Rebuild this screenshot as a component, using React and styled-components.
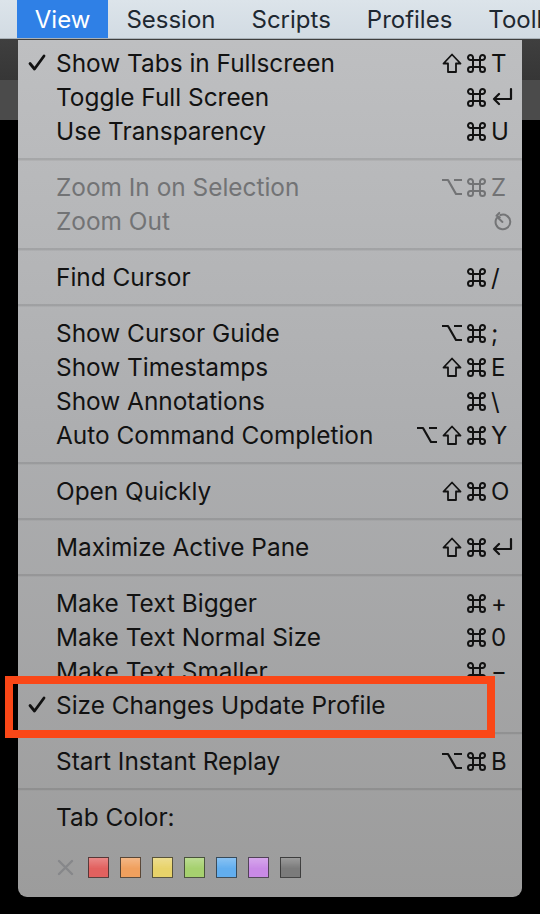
import React from "react";
import { styled, createGlobalStyle } from "styled-components";

const GlobalStyle = createGlobalStyle`
  html, body {
    margin: 0;
    padding: 0;
    background: #000;
  }
  body {
    font-family: Inter, "Liberation Sans", "DejaVu Sans", sans-serif;
  }
`;

const Screen = styled.div`
  position: relative;
  width: 540px;
  height: 914px;
  overflow: hidden;
  background: #000;
`;

const MenuBar = styled.div`
  display: flex;
  align-items: stretch;
  height: 38px;
  background: linear-gradient(#dce4ea, #d2dbe3);
  border-bottom: 1px solid #aab2b9;
`;

const MenuTitle = styled.div`
  display: flex;
  align-items: center;
  padding: 0 18px;
  margin-left: ${(p) => p.$offset || 0}px;
  font-size: 24px;
  color: ${(p) => (p.$active ? "#fff" : "#1e2831")};
  background: ${(p) => (p.$active ? "#2f80e6" : "transparent")};
  white-space: nowrap;
`;

const WindowTitleBand = styled.div`
  height: 41px;
  background: linear-gradient(#3f3f3f, #363636);
`;

const WindowTabBand = styled.div`
  height: 40px;
  background: #4b4b4b;
`;

const Terminal = styled.div`
  height: 794px;
  background: #000;
`;

const Menu = styled.div`
  position: absolute;
  left: 18px;
  top: 40px;
  width: 504px;
  height: 857px;
  box-sizing: border-box;
  padding-top: 6px;
  border-radius: 0 0 9px 9px;
  background: linear-gradient(#bebfc1 0%, #adaeb0 45%, #9c9c9c 100%);
  display: flex;
  flex-direction: column;
`;

const Row = styled.div`
  display: flex;
  align-items: center;
  height: 34px;
  padding: 0 7px 0 10px;
  font-size: 24.4px;
  color: ${(p) => (p.$disabled ? "#727375" : "#121212")};
`;

const Check = styled.div`
  width: 28px;
  height: 34px;
  flex: none;
  display: flex;
  align-items: center;
`;

const Label = styled.div`
  flex: 1;
  white-space: nowrap;
`;

const Mods = styled.div`
  display: flex;
  justify-content: flex-end;
  height: 34px;
`;

const Mod = styled.span`
  width: 25px;
  height: 34px;
  display: flex;
  align-items: center;
  justify-content: center;
`;

const Key = styled.span`
  width: 26px;
  padding-left: 2px;
  box-sizing: border-box;
  display: flex;
  align-items: center;
  font-size: 24px;
`;

const Separator = styled.div`
  height: 22px;
  display: flex;
  align-items: center;
  &::after {
    content: "";
    flex: 1;
    height: 2px;
    background: rgba(0, 0, 0, 0.1);
    border-bottom: 1px solid rgba(255, 255, 255, 0.12);
  }
`;

const SwatchRow = styled.div`
  display: flex;
  align-items: center;
  gap: 11px;
  padding: 23px 0 0 39px;
`;

const NoColor = styled.span`
  width: 17px;
  height: 21px;
  margin-right: 3px;
  display: flex;
  align-items: center;
`;

const Swatch = styled.span`
  width: 21px;
  height: 21px;
  box-sizing: border-box;
  border: 1px solid rgba(40, 40, 40, 0.75);
  background: linear-gradient(
    rgba(255, 255, 255, 0.25),
    rgba(255, 255, 255, 0) 55%
  ),
  ${(p) => p.$color};
`;

const Highlight = styled.div`
  position: absolute;
  left: 5px;
  top: 676px;
  width: 490px;
  height: 62px;
  box-sizing: border-box;
  border: 8px solid #fa4717;
  pointer-events: none;
`;

const stroke = (c) => ({
  stroke: c,
  fill: "none",
  strokeWidth: 2,
  strokeLinecap: "round",
  strokeLinejoin: "round",
});

const CheckIcon = () => (
  <svg width="18" height="18" viewBox="0 0 18 18">
    <path d="M2 9.5 L6.5 15 L16 2" {...stroke("#111")} strokeWidth="2.8" />
  </svg>
);

const CmdIcon = ({ c }) => (
  <svg width="21" height="21" viewBox="0 0 21 21">
    <path
      d="M7 7 H14 V14 H7 Z M7 7 V4.5 A2.5 2.5 0 1 0 4.5 7 H7 M14 7 H16.5 A2.5 2.5 0 1 0 14 4.5 V7 M14 14 V16.5 A2.5 2.5 0 1 0 16.5 14 H14 M7 14 H4.5 A2.5 2.5 0 1 0 7 16.5 V14"
      {...stroke(c)}
      strokeWidth="2"
    />
  </svg>
);

const ShiftIcon = ({ c }) => (
  <svg width="20" height="21" viewBox="0 0 20 21">
    <path d="M10 1.5 L18.5 10.5 H14 V19 H6 V10.5 H1.5 Z" {...stroke(c)} strokeWidth="1.8" />
  </svg>
);

const OptIcon = ({ c }) => (
  <svg width="22" height="20" viewBox="0 0 22 20">
    <path d="M1 3 H7 L15 17 H21 M13 3 H21" {...stroke(c)} strokeWidth="2.2" strokeLinecap="butt" />
  </svg>
);

const ReturnIcon = ({ c }) => (
  <svg width="22" height="20" viewBox="0 0 22 20">
    <path d="M20 2 V12 H3 M8 7 L3 12 L8 17" {...stroke(c)} strokeWidth="2.2" />
  </svg>
);

const ZoomOutIcon = () => (
  <svg width="22" height="22" viewBox="0 0 24 24">
    <path d="M10.3 5.5 A8 8 0 1 1 6.1 9" {...stroke("#747577")} strokeWidth="2.2" />
    <path d="M7 8 L12.5 13" {...stroke("#747577")} strokeWidth="2.2" />
    <path d="M9 3.2 L6 6.2 L9.6 8" {...stroke("#747577")} strokeWidth="2.2" />
  </svg>
);

const CrossIcon = () => (
  <svg width="17" height="17" viewBox="0 0 17 17">
    <path d="M2 2 L15 15 M15 2 L2 15" {...stroke("#86878a")} strokeWidth="2.4" />
  </svg>
);

const modIcons = { "⌘": CmdIcon, "⇧": ShiftIcon, "⌥": OptIcon };

const menu = [
  { label: "Show Tabs in Fullscreen", mods: "⇧⌘", key: "T", checked: true },
  { label: "Toggle Full Screen", mods: "⌘", key: "↵" },
  { label: "Use Transparency", mods: "⌘", key: "U" },
  "sep",
  { label: "Zoom In on Selection", mods: "⌥⌘", key: "Z", disabled: true },
  { label: "Zoom Out", icon: true, disabled: true },
  "sep",
  { label: "Find Cursor", mods: "⌘", key: "/" },
  "sep",
  { label: "Show Cursor Guide", mods: "⌥⌘", key: ";" },
  { label: "Show Timestamps", mods: "⇧⌘", key: "E" },
  { label: "Show Annotations", mods: "⌘", key: "\\" },
  { label: "Auto Command Completion", mods: "⌥⇧⌘", key: "Y" },
  "sep",
  { label: "Open Quickly", mods: "⇧⌘", key: "O" },
  "sep",
  { label: "Maximize Active Pane", mods: "⇧⌘", key: "↵" },
  "sep",
  { label: "Make Text Bigger", mods: "⌘", key: "+" },
  { label: "Make Text Normal Size", mods: "⌘", key: "0" },
  { label: "Make Text Smaller", mods: "⌘", key: "−" },
  { label: "Size Changes Update Profile", checked: true },
  "sep",
  { label: "Start Instant Replay", mods: "⌥⌘", key: "B" },
  "sep",
];

const swatches = [
  "#e2615f",
  "#f0a05e",
  "#e8d36a",
  "#a6d16f",
  "#62aeef",
  "#c98ae6",
  "#7b7b7b",
];

const MenuItem = ({ item }) => {
  const c = item.disabled ? "#727375" : "#121212";
  return (
    <Row $disabled={item.disabled}>
      <Check>{item.checked && <CheckIcon />}</Check>
      <Label>{item.label}</Label>
      <Mods>
        {(item.mods || "").split("").map((m, i) => {
          const Icon = modIcons[m];
          return (
            <Mod key={i}>
              <Icon c={c} />
            </Mod>
          );
        })}
      </Mods>
      <Key>
        {item.icon ? (
          <ZoomOutIcon />
        ) : item.key === "↵" ? (
          <ReturnIcon c={c} />
        ) : (
          item.key
        )}
      </Key>
    </Row>
  );
};

export default function App() {
  return (
    <>
      <GlobalStyle />
      <Screen>
        <MenuBar>
          <MenuTitle $offset={-62}>Edit</MenuTitle>
          <MenuTitle $active>View</MenuTitle>
          <MenuTitle>Session</MenuTitle>
          <MenuTitle>Scripts</MenuTitle>
          <MenuTitle>Profiles</MenuTitle>
          <MenuTitle>Toolbelt</MenuTitle>
        </MenuBar>
        <WindowTitleBand />
        <WindowTabBand />
        <Terminal />

        <Menu>
          {menu.map((item, i) =>
            item === "sep" ? <Separator key={i} /> : <MenuItem key={i} item={item} />
          )}
          <Row>
            <Check />
            <Label>Tab Color:</Label>
          </Row>
          <SwatchRow>
            <NoColor>
              <CrossIcon />
            </NoColor>
            {swatches.map((c) => (
              <Swatch key={c} $color={c} />
            ))}
          </SwatchRow>
        </Menu>
        <Highlight />
      </Screen>
    </>
  );
}
